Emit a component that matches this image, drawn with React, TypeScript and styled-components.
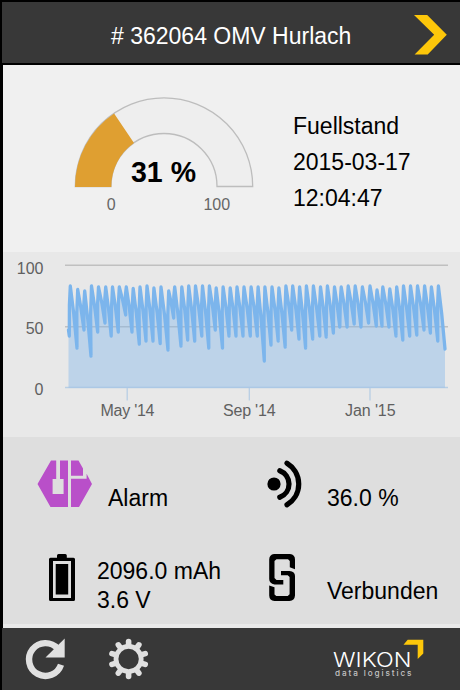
import React from "react";
import styled, { createGlobalStyle } from "styled-components";

const GlobalStyle = createGlobalStyle`
  html, body { margin: 0; padding: 0; background: #000; }
  * { box-sizing: border-box; }
`;

const Screen = styled.div`
  width: 460px;
  height: 690px;
  padding: 2px 0 0 2px;
  display: flex;
  flex-direction: column;
  overflow: hidden;
  background: #000;
  color: #000;
  font-family: "Liberation Sans", Arial, sans-serif;
  font-size: 23px;
`;

const Header = styled.header`
  height: 61px;
  flex: none;
  display: grid;
  grid-template-columns: 1fr 33px;
  align-items: center;
  padding: 4px 13px 0 109px;
  background: #383838;
  color: #fff;
`;

const Title = styled.h1`
  margin: 0;
  padding-top: 2px;
  font-size: 23px;
  line-height: 28px;
  font-weight: 400;
  white-space: nowrap;
`;

const Drawing = styled.svg`
  display: block;
  overflow: visible;
`;

const Body = styled.main`
  height: 563px;
  margin: 2px 0 0 1px;
  flex: none;
  display: flex;
  flex-direction: column;
  background: #e9e9e9;
`;

const LevelPanel = styled.section`
  height: 187px;
  display: flex;
  gap: 38px;
  padding: 30px 0 0 70px;
  background: #f0f0f0;
`;

const Reading = styled.div`
  padding-top: 13px;
  line-height: 36px;
  white-space: nowrap;
`;

const ChartPanel = styled.section`
  height: 185px;
  background: #e8e8e8;
`;

const StatusPanel = styled.section`
  height: 187px;
  display: grid;
  grid-template-columns: 230px 1fr;
  grid-template-rows: 94px 93px;
  background: #dedede;
`;

const StatusItem = styled.div<{ $indent: number; $gap: number }>`
  display: flex;
  align-items: flex-start;
  gap: ${(p) => p.$gap}px;
  padding: 23px 0 0 ${(p) => p.$indent}px;
`;

const StatusText = styled.div<{ $top: number }>`
  padding-top: ${(p) => p.$top}px;
  line-height: 29px;
  white-space: nowrap;
`;

const Footer = styled.footer`
  height: 62px;
  flex: none;
  display: flex;
  align-items: flex-start;
  padding: 10px 0 0 24px;
  background: #383838;
`;

const IconButton = styled.button`
  padding: 0;
  border: 0;
  background: none;
  margin-right: 42px;
`;

const Brand = styled.div`
  margin-left: 141px;
`;

const SvgText = styled.text<{ $size: number; $bold?: boolean }>`
  font-family: "Liberation Sans", Arial, sans-serif;
  font-size: ${(p) => p.$size}px;
  font-weight: ${(p) => (p.$bold ? 700 : 400)};
`;

const BrandText = styled.text<{ $size: number; $weight: number }>`
  font-family: Inter, "Open Sans", sans-serif;
  font-size: ${(p) => p.$size}px;
  font-weight: ${(p) => p.$weight};
`;

// Tank level over time: [x, y] pairs alternating between refill peak and low.
const levels: [number, number][] = [
  [68.5, 330], [69.3, 336], [70.3, 286], [77, 348], [77.7, 289.5], [84, 330], [84.7, 291],
  [91, 356], [91.5, 286], [97.7, 332], [98.5, 287], [105, 323], [105.7, 287], [111.2, 336],
  [112.5, 287], [118.3, 332], [119.3, 287], [125.7, 315], [126.3, 287], [132, 332],
  [133.2, 288.5], [139.3, 344], [140, 287], [146, 341], [147, 286], [153, 341],
  [153.9, 288], [160.2, 343.5], [161, 287], [168, 350], [168.7, 291], [173.7, 318],
  [174.7, 287], [181, 346], [181.8, 287], [187.7, 340], [188.7, 286], [194.7, 341],
  [195.5, 286], [201.8, 336], [202.5, 286], [208.8, 348], [209.4, 286], [215.3, 330],
  [216.2, 288], [222.5, 348], [223.1, 287], [229, 336], [230.2, 288], [236, 336],
  [237, 287], [243, 336], [244, 287], [250.3, 336], [251.1, 287], [257.3, 336],
  [258.1, 287], [264.3, 361], [264.9, 287], [271, 345], [272, 287], [278.2, 341],
  [278.9, 288], [285.2, 347], [285.9, 286], [291.7, 330], [292.7, 286], [299, 339],
  [299.6, 287], [305.6, 348], [306.4, 286], [312.7, 339], [313.4, 286], [319.8, 336],
  [320.5, 287], [326.2, 337], [327.4, 286], [333.4, 333], [334.5, 287], [339.8, 327],
  [341.2, 287], [347.1, 327], [348.2, 286], [354.2, 324], [355.2, 286], [361, 327],
  [362.4, 287], [368.6, 323], [370, 286], [376.3, 326], [377, 290], [382, 326],
  [382.8, 287], [389, 327], [389.8, 289], [396, 336], [396.7, 287], [402.8, 340],
  [403.5, 286], [409.7, 336], [410.5, 286], [416.8, 335], [417.5, 286], [424, 330],
  [424.6, 286], [430.4, 333], [431.4, 287], [437.8, 341], [438.4, 286], [445, 349],
];

const linePath =
  "M" +
  levels
    .map(([x, y], i) => {
      const prev = levels[i - 1];
      if (!prev || i < 2) return `${x} ${y}`;
      if (y < prev[1]) {
        // Refills start steeply and lean towards the peak.
        return `${(x - 0.9).toFixed(1)} ${((y + prev[1]) / 2 - 6).toFixed(1)} L${x} ${y}`;
      }
      const mx = prev[0] + (x - prev[0]) * 0.5;
      const my = prev[1] + (y - prev[1]) * 0.44;
      return `${mx.toFixed(1)} ${my.toFixed(1)} L${x} ${y}`;
    })
    .join(" L");
const areaPath = `${linePath} V387.5 H68.5 Z`;

const Gauge = () => (
  <Drawing width="182" height="120" viewBox="73 95 182 120">
    <path
      d="M75.3 186.5 A88.7 88.7 0 0 1 252.7 186.5 H217 A53 53 0 0 0 111 186.5 Z"
      fill="#eee" stroke="#bdbdbd" strokeWidth="1.3"
    />
    <path d="M75 187 A88.7 88.7 0 0 1 114.1 113.4 L134 143 A53 53 0 0 0 111.3 187 Z" fill="#df9f31" />
    <SvgText $size={29} $bold x="163.5" y="181.5" textAnchor="middle" textLength="65" lengthAdjust="spacingAndGlyphs">31 %</SvgText>
    <SvgText $size={16} x="111.2" y="209.5" textAnchor="middle" fill="#666">0</SvgText>
    <SvgText $size={16} x="216.8" y="209.5" textAnchor="middle" fill="#666">100</SvgText>
  </Drawing>
);

const HistoryChart = () => (
  <Drawing width="457" height="185" viewBox="3 252 457 185">
    <path d="M65 265.3 H448 M65 326.7 H448" stroke="#c0c0c0" strokeWidth="1.4" />
    <path d="M65 387.5 H448 M127.2 387 V400.5 M249.3 387 V400.5 M370 387 V400.5" stroke="#b8cee4" strokeWidth="1.3" fill="none" />
    <path d={areaPath} fill="#7cb5ec" fillOpacity="0.4" />
    <path d={linePath} fill="none" stroke="#7cb5ec" strokeWidth="3.3" strokeLinejoin="round" strokeLinecap="round" />
    <g fill="#606060" textAnchor="end">
      <SvgText $size={16} x="43.5" y="274">100</SvgText>
      <SvgText $size={16} x="43.5" y="334">50</SvgText>
      <SvgText $size={16} x="43.5" y="395">0</SvgText>
    </g>
    <g fill="#606060" textAnchor="middle">
      <SvgText $size={16} x="127.5" y="415.5" textLength="54">May '14</SvgText>
      <SvgText $size={16} x="249.3" y="415.5" textLength="52.5">Sep '14</SvgText>
      <SvgText $size={16} x="370.3" y="415.5" textLength="50.5">Jan '15</SvgText>
    </g>
  </Drawing>
);

const AlarmIcon = () => (
  <Drawing width="55" height="48" viewBox="37 460 55 48">
    <path d="M37.5 484 L51 460.5 H56.2 V479 H52.6 V494 H63.6 V479 H60 V460.5 H68 V507 H50.5 Z" fill="#b94fc9" />
    <path d="M71 460.5 H78.5 L83 468.5 V475.8 H71 Z M71 478.8 H86.6 V473.8 L92 484 L79 507 H71 Z" fill="#b94fc9" />
  </Drawing>
);

const SignalIcon = () => (
  <Drawing width="36" height="48" viewBox="267 460 36 48">
    <circle cx="274" cy="484" r="6.6" />
    <path d="M279.8 470.7 A14.2 14.2 0 0 1 279.8 497.3 M287 463.2 A24.3 24.3 0 0 1 287 504.8" fill="none" stroke="#000" strokeWidth="5.2" strokeLinecap="round" />
  </Drawing>
);

const BatteryIcon = () => (
  <Drawing width="26" height="48" viewBox="49 554 26 48">
    <path fillRule="evenodd" d="M57 557.7 V555.5 Q57 554 58.5 554 H65.3 Q66.8 554 66.8 555.5 V557.7 H73.5 Q75 557.7 75 559.2 V599.5 Q75 601 73.5 601 H50.5 Q49 601 49 599.5 V559.2 Q49 557.7 50.5 557.7 Z M53 561 V598 H71 V561 Z" />
    <path d="M55.7 564 H68.2 V594.5 H55.7 Z" />
  </Drawing>
);

const LinkIcon = () => (
  <Drawing width="26" height="48" viewBox="269 554 26 48">
    <path d="M274 554 H290 Q295 554.6 295 559.5 V569.3 L289.8 567.3 V561 L288 559.2 H276.5 L274.5 561 V578 L276.5 580 H283.3 V584.4 H274.5 Q269.2 583.5 269.2 579 V559.5 Q269.4 554.6 274 554 Z" />
    <path d="M281 571 H289.5 Q295 571.6 295 576 V595.5 Q294.6 600.6 289.5 601 H274.5 Q269.4 600.6 269.2 595.5 V585.5 L274.5 587.3 V594.5 L276.3 596 H287.7 L289.6 594.3 V577 L287.7 575.3 H281 Z" />
  </Drawing>
);

const RefreshIcon = () => (
  <Drawing width="40" height="42" viewBox="26 638 40 42">
    <path d="M57.7 648.6 A16.4 16.4 0 1 0 61 664.7" fill="none" stroke="#e0e0e0" strokeWidth="6.4" />
    <path d="M64.7 638.5 V657.5 H45.5 Z" fill="#e0e0e0" />
  </Drawing>
);

const GearIcon = () => (
  <Drawing width="42" height="42" viewBox="108 638 42 42">
    <circle cx="128.6" cy="659" r="12.6" fill="none" stroke="#e0e0e0" strokeWidth="4.8" />
    {Array.from({ length: 10 }, (_, i) => (
      <path key={i} d="M128.6 645 V641.5" transform={`rotate(${i * 36} 128.6 659)`} stroke="#e0e0e0" strokeWidth="5.6" strokeLinecap="round" />
    ))}
  </Drawing>
);

const WikonLogo = () => (
  <Drawing width="92" height="42" viewBox="333 638 92 42">
    <BrandText $size={20} $weight={300} x="333" y="666.6" fill="#fff" textLength="78.5" lengthAdjust="spacingAndGlyphs">WIKON</BrandText>
    <BrandText $size={8.2} $weight={500} x="335" y="675.8" fill="#c4c4c4" textLength="76.5">data logistics</BrandText>
    <path d="M407.7 639.7 H423.3 V653.5 L417.7 659 V644.8 H403.5 Z" fill="#fdc70a" />
  </Drawing>
);

export default function App() {
  return (
    <>
      <GlobalStyle />
      <Screen>
        <Header>
          <Title># 362064 OMV Hurlach</Title>
          <Drawing width="33" height="40" viewBox="414 13.7 33 40">
            <path d="M414 13.7 H427.2 L446.8 33.5 L427.7 53.3 H414.6 L434.2 33.5 Z" fill="#fdc70a" />
          </Drawing>
        </Header>
        <Body>
          <LevelPanel>
            <Gauge />
            <Reading>
              <div>Fuellstand</div>
              <div>2015-03-17</div>
              <div>12:04:47</div>
            </Reading>
          </LevelPanel>
          <ChartPanel>
            <HistoryChart />
          </ChartPanel>
          <StatusPanel>
            <StatusItem $indent={34} $gap={16}>
              <AlarmIcon />
              <StatusText $top={24}>Alarm</StatusText>
            </StatusItem>
            <StatusItem $indent={34} $gap={24}>
              <SignalIcon />
              <StatusText $top={24}>36.0 %</StatusText>
            </StatusItem>
            <StatusItem $indent={46} $gap={22}>
              <BatteryIcon />
              <StatusText $top={3}>
                <div>2096.0 mAh</div>
                <div>3.6 V</div>
              </StatusText>
            </StatusItem>
            <StatusItem $indent={36} $gap={32}>
              <LinkIcon />
              <StatusText $top={23}>Verbunden</StatusText>
            </StatusItem>
          </StatusPanel>
        </Body>
        <Footer>
          <IconButton aria-label="Refresh"><RefreshIcon /></IconButton>
          <IconButton aria-label="Settings"><GearIcon /></IconButton>
          <Brand><WikonLogo /></Brand>
        </Footer>
      </Screen>
    </>
  );
}
